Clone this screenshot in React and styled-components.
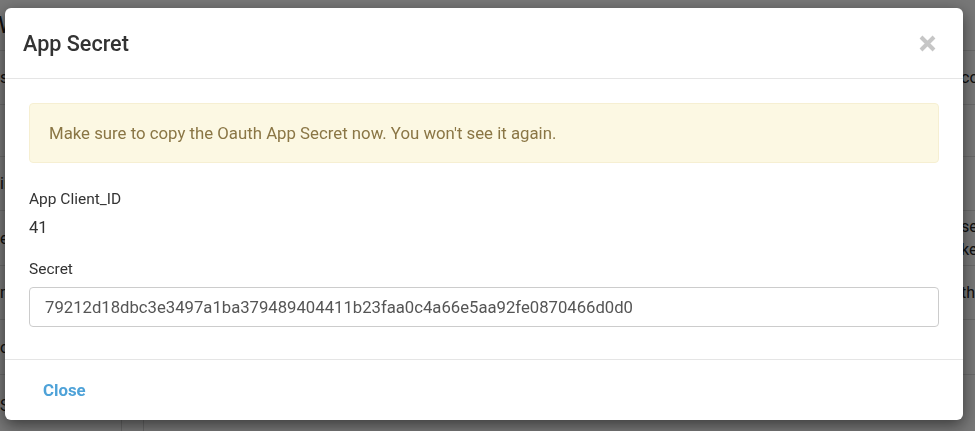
import React from "react";
import styled, { createGlobalStyle } from "styled-components";

const GlobalStyle = createGlobalStyle`
  html, body {
    margin: 0;
    padding: 0;
    background: #eeeeee;
    font-family: Roboto, "Liberation Sans", sans-serif;
    overflow: hidden;
  }
`;

const Page = styled.div`
  width: 975px;
  height: 431px;
  overflow: hidden;
  background: #eeeeee;
  color: #222;
`;

const PageTop = styled.div`
  height: 50px;
  border-bottom: 1px solid #d2d2d2;
  display: flex;
  align-items: center;
  font-size: 24px;
  margin-left: -2px;
`;

const PageRow = styled.div`
  display: grid;
  grid-template-columns: 122px 22px 1fr;
  height: ${(props) => props.h}px;
  border-bottom: 1px solid #d2d2d2;
`;

const Cell = styled.div`
  border-right: ${(props) => (props.edge ? "1px solid #cbcbcb" : "none")};
  display: flex;
  align-items: center;
  font-size: 16px;
  white-space: nowrap;
  overflow: hidden;
`;

const RightCell = styled(Cell)`
  flex-direction: column;
  align-items: flex-end;
  justify-content: center;
  gap: 4px;
`;

const RightSnippet = styled.span`
  width: 14px;
  overflow: hidden;
`;

const Overlay = styled.div`
  position: fixed;
  inset: 0;
  background: rgba(0, 0, 0, 0.5);
  display: flex;
  align-items: flex-start;
  padding: 8px 0 0 5px;
`;

const Modal = styled.div`
  width: 958px;
  background: #fff;
  border-radius: 6px;
  box-shadow: 0 5px 15px rgba(0, 0, 0, 0.5);
  overflow: hidden;
`;

const Header = styled.div`
  height: 71px;
  box-sizing: border-box;
  border-bottom: 1px solid #e5e5e5;
  display: flex;
  align-items: center;
  justify-content: space-between;
  padding: 0 27px 0 18px;
`;

const Title = styled.h4`
  margin: 0;
  font-size: 21.6px;
  font-weight: 500;
  color: #333;
`;

const CloseX = styled.button`
  border: none;
  background: none;
  padding: 0;
  width: 17px;
  height: 17px;
  cursor: pointer;
  display: flex;
`;

const Body = styled.div`
  padding: 24px 24px 32px;
`;

const Alert = styled.div`
  height: 60px;
  box-sizing: border-box;
  background: #fcf8e3;
  border: 1px solid #f6efd2;
  border-radius: 4px;
  color: #8a7645;
  font-size: 16.8px;
  display: flex;
  align-items: center;
  padding: 0 19px;
  margin-bottom: 25px;
`;

const Label = styled.div`
  font-size: 15.5px;
  line-height: 22px;
  color: #333;
`;

const Value = styled.div`
  font-size: 16.5px;
  line-height: 22px;
  color: #333;
  margin-top: 7px;
  margin-bottom: 19px;
`;

const Field = styled.input`
  display: block;
  width: 100%;
  box-sizing: border-box;
  height: 40px;
  margin-top: 7px;
  border: 1px solid #ccc;
  border-radius: 4px;
  padding: 0 15px;
  font-family: Roboto, "Liberation Sans", sans-serif;
  font-size: 16.7px;
  color: #555;
  outline: none;
`;

const Footer = styled.div`
  height: 60px;
  border-top: 1px solid #e5e5e5;
  display: flex;
  align-items: center;
  padding-left: 24px;
`;

const LinkButton = styled.button`
  border: none;
  background: none;
  padding: 6px 14px;
  font-family: Roboto, "Liberation Sans", sans-serif;
  font-size: 16.8px;
  font-weight: 700;
  color: #4ea2d8;
  cursor: pointer;
`;

const bgRows = [
  { h: 53, left: "sc", right: "co" },
  { h: 51, left: "" },
  { h: 53, left: "in", right: "" },
  { h: 54, left: "en", right: ["se", "ke"] },
  { h: 53, left: "nt", right: ["th"] },
  { h: 54, left: "op" },
  { h: 60, left: "Se" },
];

export default function App() {
  return (
    <>
      <GlobalStyle />
      <Page>
        <PageTop>Web</PageTop>
        {bgRows.map((row, i) => (
          <PageRow key={i} h={row.h}>
            <Cell edge>{row.left}</Cell>
            <Cell edge />
            <RightCell>
              {[].concat(row.right || []).map((t) => (
                <RightSnippet key={t}>{t}</RightSnippet>
              ))}
            </RightCell>
          </PageRow>
        ))}
      </Page>
      <Overlay>
        <Modal>
          <Header>
            <Title>App Secret</Title>
            <CloseX aria-label="Close">
              <svg width="17" height="17" viewBox="0 0 17 17">
                <path
                  d="M2 2 L15 15 M15 2 L2 15"
                  stroke="#c6c6c6"
                  strokeWidth="4"
                />
              </svg>
            </CloseX>
          </Header>
          <Body>
            <Alert>
              Make sure to copy the Oauth App Secret now. You won't see it again.
            </Alert>
            <Label>App Client_ID</Label>
            <Value>41</Value>
            <Label>Secret</Label>
            <Field
              readOnly
              value="79212d18dbc3e3497a1ba379489404411b23faa0c4a66e5aa92fe0870466d0d0"
            />
          </Body>
          <Footer>
            <LinkButton>Close</LinkButton>
          </Footer>
        </Modal>
      </Overlay>
    </>
  );
}
